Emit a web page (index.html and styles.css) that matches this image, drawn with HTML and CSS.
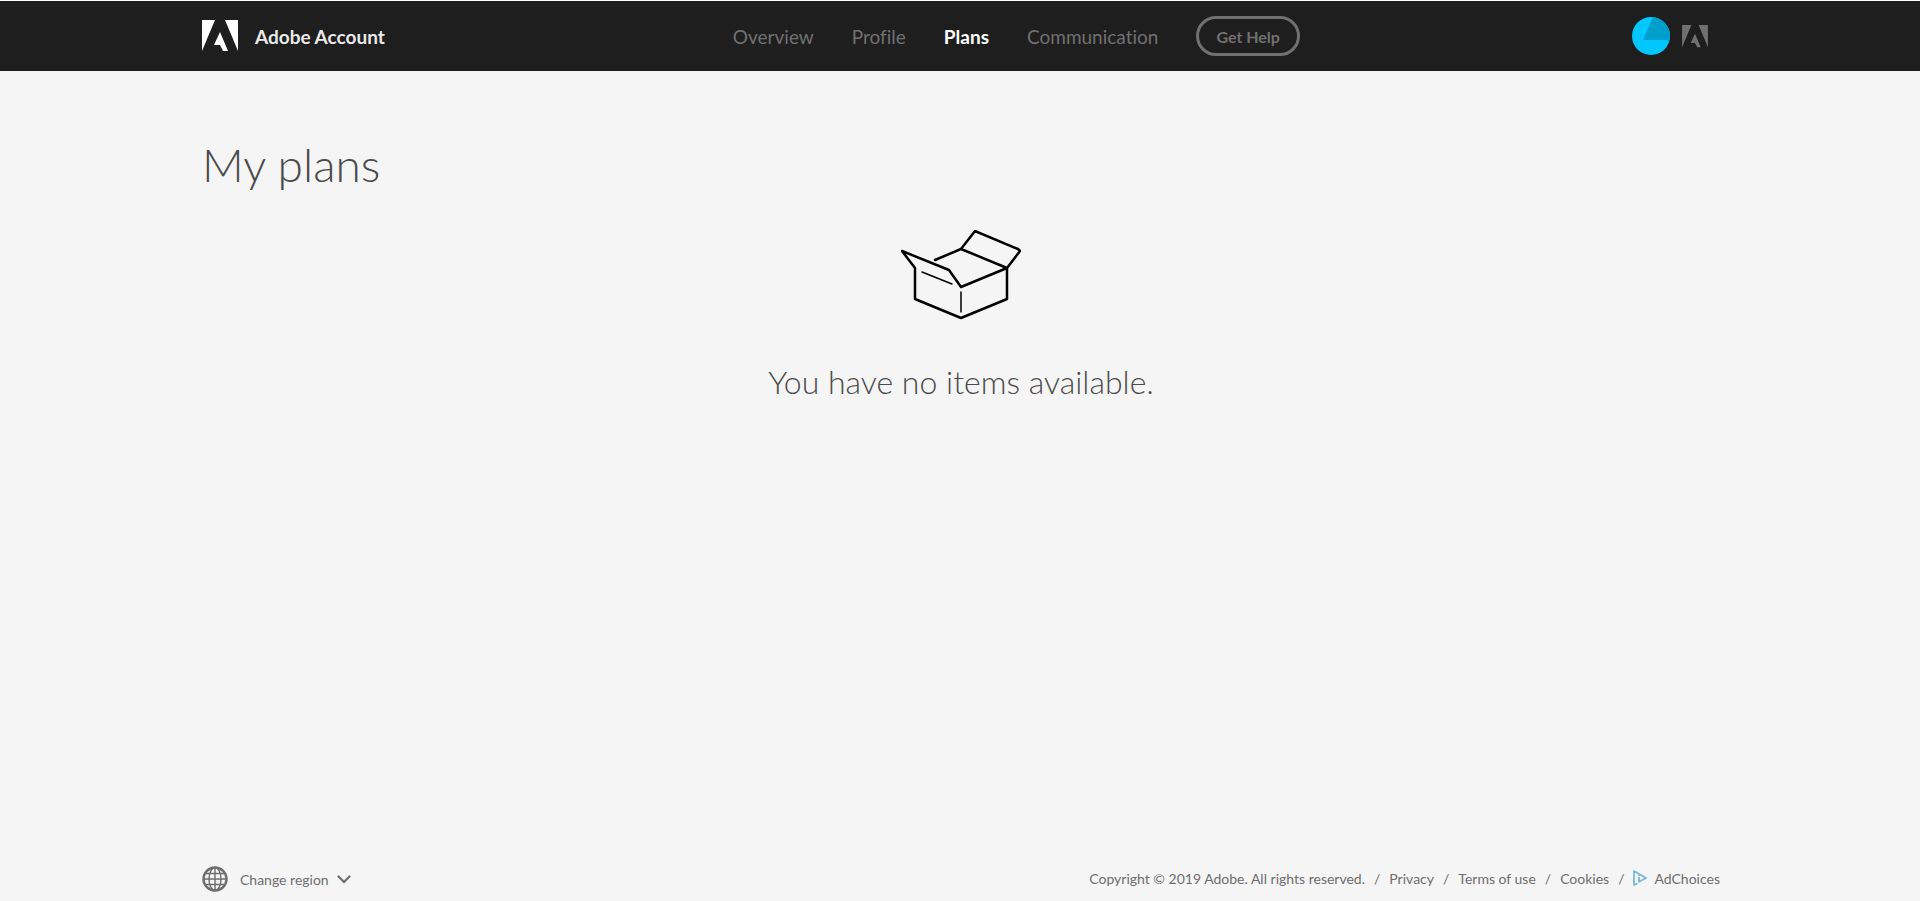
FILE: index.html
```
<!DOCTYPE html>
<html lang="en">
<head>
    <meta charset="UTF-8">
    <meta name="viewport" content="width=device-width, initial-scale=1.0">
    <title>Adobe Account</title>
    <link rel="stylesheet" href="styles.css">
</head>
<body>
    <header class="header">
        <div class="container header-inner">
            <a class="brand" href="#">
                <svg class="brand-logo" viewBox="0 0 36 32" aria-hidden="true">
                    <path fill="currentColor" d="M0 0h13L0 31zM23 0h13v31zM18 12l8 19h-5l-3-6h-6z"/>
                </svg>
                <span>Adobe Account</span>
            </a>

            <nav class="nav">
                <a href="#">Overview</a>
                <a href="#">Profile</a>
                <a href="#" class="active" aria-current="page">Plans</a>
                <a href="#">Communication</a>
                <button type="button" class="help-button">Get Help</button>
            </nav>

            <div class="user">
                <button type="button" class="avatar" aria-label="User profile">
                    <svg viewBox="0 0 38 38" aria-hidden="true">
                        <circle cx="19" cy="19" r="19" fill="#00c8ff"/>
                        <path fill="#009fcb" d="M21 0A19 19 0 0 1 37 25Q36 23 33 23H11z"/>
                    </svg>
                </button>
                <a class="adobe-link" href="#" aria-label="Adobe">
                    <svg viewBox="0 0 36 32" aria-hidden="true">
                        <path fill="currentColor" d="M0 0h13L0 31zM23 0h13v31zM18 12l8 19h-5l-3-6h-6z"/>
                    </svg>
                </a>
            </div>
        </div>
    </header>

    <main class="container main">
        <h1>My plans</h1>
        <div class="empty">
            <svg class="empty-box" viewBox="0 0 120 90" aria-hidden="true">
                <g fill="none" stroke="#000" stroke-linecap="round" stroke-linejoin="round">
                    <path stroke-width="2.5" d="M14 38V69L60 88L106 69V38L60 57L48 40L1 21L14 38M34 30L60 19L106 38L119 21L117 19L74 1L60 19"/>
                    <path stroke-width="1.5" d="M21 42L51 54M60 62V82"/>
                </g>
            </svg>
            <h2>You have no items available.</h2>
        </div>
    </main>

    <footer class="container footer">
        <button type="button" class="region">
            <svg class="globe" viewBox="0 0 26 26" aria-hidden="true">
                <g fill="none" stroke="currentColor">
                    <circle cx="13" cy="13" r="11.5" stroke-width="2.4"/>
                    <ellipse cx="13" cy="13" rx="6" ry="11.5" stroke-width="1.4"/>
                    <path stroke-width="1.4" d="M13 1.5V24.5M1.5 13H24.5M3.5 7.5H22.5M3.5 18.5H22.5"/>
                </g>
            </svg>
            <span>Change region</span>
            <svg class="chevron" viewBox="0 0 14 9" aria-hidden="true">
                <path fill="none" stroke="currentColor" stroke-width="2.2" stroke-linecap="round" d="M1.5 1.5L7 7L12.5 1.5"/>
            </svg>
        </button>

        <div class="legal">
            <span>Copyright © 2019 Adobe. All rights reserved.</span>
            <span>/</span>
            <a href="#">Privacy</a>
            <span>/</span>
            <a href="#">Terms of use</a>
            <span>/</span>
            <a href="#">Cookies</a>
            <span>/</span>
            <a href="#" class="adchoices">
                <svg viewBox="0 0 14 16" aria-hidden="true">
                    <path fill="none" stroke="#78b8e2" stroke-width="1.8" stroke-linejoin="round" d="M4.500 13.500L1 15V1L13 8L6 11.800V7"/>
                    <circle cx="6" cy="5" r="1" fill="#78b8e2"/>
                </svg>
                <span>AdChoices</span>
            </a>
        </div>
    </footer>
</body>
</html>
```
FILE: styles.css
```
* {
    margin: 0;
    padding: 0;
    box-sizing: border-box;
}

body {
    display: flex;
    flex-direction: column;
    min-height: 100vh;
    font-family: Lato, "Open Sans", sans-serif;
    font-variant-ligatures: none;
    background: #f5f5f5;
    color: #4b4b4b;
}

a {
    color: inherit;
    text-decoration: none;
}

button {
    font-family: inherit;
    color: inherit;
    background: none;
    border: none;
    cursor: pointer;
}

svg {
    display: block;
}

.container {
    width: 100%;
    max-width: 1520px;
    margin: 0 auto;
    padding: 0 0 0 2px;
}

.header {
    background: #1e1e1e;
    border-top: 1px solid #fff;
}

.header-inner {
    display: flex;
    align-items: center;
    justify-content: space-between;
    height: 70px;
    padding-right: 12px;
}

.brand {
    display: flex;
    align-items: center;
    gap: 17px;
    font-size: 19px;
    font-weight: 700;
    color: #eaeaea;
}

.brand-logo {
    width: 36px;
    height: 32px;
    color: #fff;
}

.nav {
    display: flex;
    align-items: center;
    gap: 38px;
    margin-left: 16px;
    font-size: 19px;
    color: #707070;
}

.nav .active {
    color: #fff;
    font-weight: 700;
}

.help-button {
    height: 40px;
    padding: 0 17px;
    border: 3px solid #707070;
    border-radius: 20px;
    font-size: 16px;
    font-weight: 700;
}

.user {
    display: flex;
    align-items: center;
    gap: 12px;
}

.avatar {
    width: 38px;
    height: 38px;
    border-radius: 50%;
}

.adobe-link svg {
    width: 26px;
    height: 23px;
    color: #707070;
}

.main {
    flex: 1;
    padding-top: 64px;
}

h1 {
    font-size: 46px;
    line-height: 60px;
    font-weight: 300;
}

.empty {
    display: flex;
    flex-direction: column;
    align-items: center;
    padding-top: 35px;
}

.empty-box {
    width: 120px;
    height: 90px;
}

h2 {
    margin-top: 42px;
    font-size: 32px;
    line-height: 40px;
    font-weight: 300;
}

.footer {
    display: flex;
    align-items: center;
    justify-content: space-between;
    padding-bottom: 9px;
    font-size: 14px;
    color: #6e6e6e;
}

.region {
    display: flex;
    align-items: center;
    gap: 12px;
    font-size: 14px;
}

.globe {
    width: 26px;
    height: 26px;
}

.chevron {
    width: 14px;
    height: 9px;
    margin-left: -4px;
}

.legal {
    display: flex;
    align-items: center;
    gap: 9px;
    padding-bottom: 2px;
}

.adchoices {
    display: flex;
    align-items: center;
    gap: 7px;
}

.adchoices svg {
    width: 14px;
    height: 16px;
}
```
